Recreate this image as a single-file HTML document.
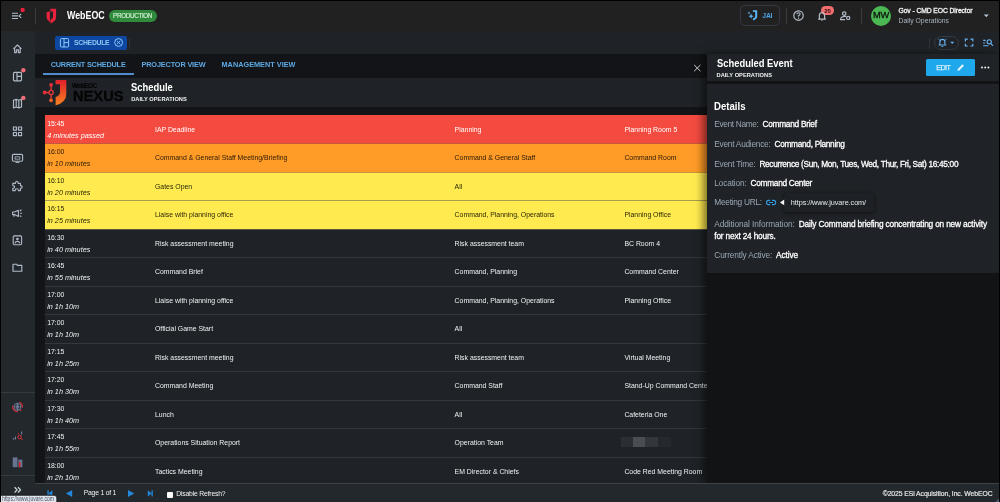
<!DOCTYPE html>
<html lang="en">
<head>
<meta charset="utf-8">
<title>WebEOC - Schedule</title>
<style>
*{box-sizing:border-box;margin:0;padding:0}
html,body{width:1000px;height:502px;overflow:hidden;background:#000;font-family:"Liberation Sans",Arial,sans-serif;color:#fff}
#app{position:absolute;left:0;top:0;width:1000px;height:502px;background:#121417;overflow:hidden;will-change:transform}
#frame{position:absolute;left:0;top:0;width:1000px;height:502px;border:1px solid #000;border-bottom:0;border-right-width:1.2px;pointer-events:none}
.t{position:absolute;white-space:nowrap;line-height:1}
.b{font-weight:bold}
#ico{position:absolute;left:0;top:0;width:1000px;height:502px;overflow:visible}
/* top bar */
#topbar{position:absolute;left:0;top:0;width:1000px;height:31px;background:#212121}
.vdiv{position:absolute;width:1px;background:#3d3d3d}
/* sidebar */
#sidebar{position:absolute;left:0;top:31px;width:35px;height:471px;background:#23282c}
.hdiv{position:absolute;left:1px;width:34px;height:1px;background:#353a3f}
/* tab bar */
#tabbar{position:absolute;left:35px;top:31px;width:965px;height:23px;background:#1f2327}
#navtabs{position:absolute;left:35px;top:54px;width:672px;height:24px;background:#121417}
#bhead{position:absolute;left:35px;top:78px;width:672px;height:29px;background:#1f2327}
/* table */
#tbl{position:absolute;left:44.5px;top:115px;width:662.5px;height:368px;overflow:hidden}
.row{position:absolute;left:0;width:663px;height:29px;background:#1f2226;border-top:1px solid #33383d;font-size:6.9px;color:#eef1f4}
.row span{position:absolute;white-space:nowrap;line-height:1}
.c1{left:2.7px;top:5.4px}
.c1i{left:2.7px;top:16.1px;font-style:italic;font-size:7.25px}
.c2{left:110.5px;top:11.3px}
.c3{left:410.1px;top:11.3px}
.c4{left:579.9px;top:11.3px}
.red{background:#f34b40;color:#fff;border-top-color:#f34b40}
.org{background:#ff9b27;color:#2a1c08;border-top-color:#c5583a}
.yel{background:#ffeb50;color:#2a2608;border-top-color:#a79d4d}
.yel1{border-top-color:#c9973a}
.d1{border-top-color:#5a583c}
.blur{position:absolute;left:576px;top:7.8px;width:50px;height:10px;background:linear-gradient(90deg,#2b2f33 0,#2b2f33 24%,#4a4e52 24%,#4a4e52 48%,#33373b 48%,#33373b 74%,#25292d 74%,#25292d 100%)}
/* bottom bar */
#bbar{position:absolute;left:35px;top:483.3px;width:965px;height:19px;background:#23282c;border-top:1px solid #3d4247}
/* right panel */
#rpanel{position:absolute;left:707px;top:54px;width:293px;height:429px;background:#111315;box-shadow:-4px 0 8px rgba(0,0,0,.5)}
#rhead{position:absolute;left:0;top:0;width:293px;height:26.6px;background:#1f2327}
#rcard{position:absolute;left:0;top:30px;width:293px;height:188.7px;background:#1f2226}
.lbl{color:#9aa7b4;font-size:8.3px}
.val{color:#fff;font-size:8.3px;-webkit-text-stroke:0.28px #fff}
.m{-webkit-text-stroke:0.25px currentColor}
</style>
</head>
<body>
<div id="app">

<!-- TOP BAR -->
<div id="topbar">
 <div class="vdiv" style="left:35px;top:8px;height:16px"></div>
 <div class="t b" style="transform-origin:0 50%;transform:scaleX(0.8517);left:66.8px;top:10.7px;font-size:10.4px;color:#fff">WebEOC</div>
 <div style="position:absolute;left:108.8px;top:10px;width:48px;height:11.8px;border-radius:6px;background:#2f8a3b"></div>
 <div class="t" style="letter-spacing:-0.334px;left:113.1px;top:12.8px;font-size:6.3px;color:#d4f0d6;-webkit-text-stroke:0.15px #d4f0d6">PRODUCTION</div>
 <div style="position:absolute;left:739.8px;top:5.1px;width:40px;height:21px;border:1px solid #333a42;border-radius:4.5px"></div>
 <div class="t b" style="letter-spacing:-0.193px;left:762.3px;top:13.1px;font-size:6.8px;color:#4ea6e6">JAI</div>
 <div class="vdiv" style="left:786px;top:8px;height:16px"></div>
 <div style="position:absolute;left:820.8px;top:6.3px;width:13.6px;height:8.8px;border-radius:4.4px;background:#f26d6d;box-shadow:0 0 0 0.8px #212121"></div>
 <div class="t b" style="letter-spacing:0.056px;left:824.2px;top:8.1px;font-size:6px;color:#2a0d0d">20</div>
 <div class="vdiv" style="left:861px;top:8px;height:16px"></div>
 <div style="position:absolute;left:870.9px;top:5.5px;width:20.2px;height:20.2px;border-radius:50%;background:#4cb853"></div>
 <div class="t" style="letter-spacing:-0.016px;left:872.9px;top:11.2px;font-size:9.3px;color:#0e140f;-webkit-text-stroke:0.3px #0e140f">MW</div>
 <div class="t m" style="letter-spacing:-0.104px;left:898.5px;top:8.2px;font-size:6.8px;color:#f4f4f4;-webkit-text-stroke-width:0.3px">Gov - CMD EOC Director</div>
 <div class="t" style="letter-spacing:0.009px;left:898.5px;top:18.1px;font-size:6.8px;color:#a9b4bf">Daily Operations</div>
</div>

<!-- SIDEBAR -->
<div id="sidebar"></div>
<div class="hdiv" style="top:392px"></div>
<div class="hdiv" style="top:475px"></div>

<!-- TAB BAR -->
<div id="tabbar">
 <div style="position:absolute;left:19.7px;top:4.6px;width:72.5px;height:14.5px;border-radius:2px;background:#0d47a1"></div>
 <div class="t b" style="letter-spacing:-0.274px;left:39.1px;top:8.9px;font-size:6.8px;color:#8fc6f5">SCHEDULE</div>
 <div class="vdiv" style="left:94px;top:6.5px;height:11px;background:#2d3237"></div>
 <div class="vdiv" style="left:894.2px;top:7px;height:11px;background:#2f3439"></div>
 <div style="position:absolute;left:898.8px;top:4.8px;width:25.5px;height:14px;border:1px solid #333a41;border-radius:7px"></div>
</div>
<div id="navtabs">
 <div class="t b" style="letter-spacing:-0.184px;left:15.7px;top:6.8px;font-size:7.3px;color:#5ea9e4">CURRENT SCHEDULE</div>
 <div class="t b" style="letter-spacing:-0.141px;left:106.5px;top:6.8px;font-size:7.3px;color:#5ea9e4">PROJECTOR VIEW</div>
 <div class="t b" style="letter-spacing:0.015px;left:186.5px;top:6.8px;font-size:7.3px;color:#5ea9e4">MANAGEMENT VIEW</div>
 <div style="position:absolute;left:7.7px;top:18.6px;width:91px;height:2px;background:#4f8ecb"></div>
</div>
<div id="bhead">
 <div class="t b" style="letter-spacing:-0.439px;left:37.1px;top:4.9px;font-size:6.4px;color:#050505;-webkit-text-stroke:0.2px #050505">WebEOC</div>
 <div class="t b" style="transform-origin:0 50%;transform:scaleX(0.9456);left:37.6px;top:10.3px;font-size:15.5px;color:#050505;-webkit-text-stroke:0.35px #050505">NEXUS</div>
 <div class="t b" style="transform-origin:0 50%;transform:scaleX(0.9047);left:96.2px;top:4.8px;font-size:10.4px;color:#fff">Schedule</div>
 <div class="t b" style="letter-spacing:0.025px;left:96.2px;top:18.8px;font-size:5.7px;color:#f0f0f0">DAILY OPERATIONS</div>
</div>

<!-- TABLE -->
<div id="tbl">
 <div class="row red" style="top:-0.5px"><span class="c1">15:45</span><span class="c1i">4 minutes passed</span><span class="c2">IAP Deadline</span><span class="c3">Planning</span><span class="c4">Planning Room 5</span></div>
 <div class="row org" style="top:28.0px"><span class="c1">16:00</span><span class="c1i">in 10 minutes</span><span class="c2">Command &amp; General Staff Meeting/Briefing</span><span class="c3">Command &amp; General Staff</span><span class="c4">Command Room</span></div>
 <div class="row yel yel1" style="top:56.5px"><span class="c1">16:10</span><span class="c1i">in 20 minutes</span><span class="c2">Gates Open</span><span class="c3">All</span></div>
 <div class="row yel" style="top:85.0px"><span class="c1">16:15</span><span class="c1i">in 25 minutes</span><span class="c2">Liaise with planning office</span><span class="c3">Command, Planning, Operations</span><span class="c4">Planning Office</span></div>
 <div class="row d1" style="top:113.5px"><span class="c1">16:30</span><span class="c1i">in 40 minutes</span><span class="c2">Risk assessment meeting</span><span class="c3">Risk assessment team</span><span class="c4">BC Room 4</span></div>
 <div class="row " style="top:142.0px"><span class="c1">16:45</span><span class="c1i">in 55 minutes</span><span class="c2">Command Brief</span><span class="c3">Command, Planning</span><span class="c4">Command Center</span></div>
 <div class="row " style="top:170.5px"><span class="c1">17:00</span><span class="c1i">in 1h 10m</span><span class="c2">Liaise with planning office</span><span class="c3">Command, Planning, Operations</span><span class="c4">Planning Office</span></div>
 <div class="row " style="top:199.0px"><span class="c1">17:00</span><span class="c1i">in 1h 10m</span><span class="c2">Official Game Start</span><span class="c3">All</span></div>
 <div class="row " style="top:227.5px"><span class="c1">17:15</span><span class="c1i">in 1h 25m</span><span class="c2">Risk assessment meeting</span><span class="c3">Risk assessment team</span><span class="c4">Virtual Meeting</span></div>
 <div class="row " style="top:256.0px"><span class="c1">17:20</span><span class="c1i">in 1h 30m</span><span class="c2">Command Meeting</span><span class="c3">Command Staff</span><span class="c4">Stand-Up Command Center</span></div>
 <div class="row " style="top:284.5px"><span class="c1">17:30</span><span class="c1i">in 1h 40m</span><span class="c2">Lunch</span><span class="c3">All</span><span class="c4">Cafeteria One</span></div>
 <div class="row " style="top:313.0px"><span class="c1">17:45</span><span class="c1i">in 1h 55m</span><span class="c2">Operations Situation Report</span><span class="c3">Operation Team</span><i class="blur"></i></div>
 <div class="row " style="top:341.5px"><span class="c1">18:00</span><span class="c1i">in 2h 10m</span><span class="c2">Tactics Meeting</span><span class="c3">EM Director &amp; Chiefs</span><span class="c4">Code Red Meeting Room</span></div>
</div>

<!-- RIGHT PANEL -->
<div id="rpanel">
 <div id="rhead">
  <div class="t b" style="transform-origin:0 50%;transform:scaleX(0.9029);left:9.5px;top:4.6px;font-size:10.4px;color:#fff">Scheduled Event</div>
  <div class="t b" style="letter-spacing:0.019px;left:9.5px;top:19px;font-size:5.7px;color:#f0f0f0">DAILY OPERATIONS</div>
  <div style="position:absolute;left:219.2px;top:5px;width:48.6px;height:17px;border-radius:1.5px;background:#1fa8ec"></div>
  <div class="t m" style="letter-spacing:-0.544px;left:229.2px;top:10px;font-size:7.2px;color:#d4eeff">EDIT</div>
 </div>
 <div id="rcard">
  <div class="t b" style="transform-origin:0 50%;transform:scaleX(0.9243);left:7.4px;top:17.7px;font-size:10.4px;color:#fff">Details</div>
  <div class="t lbl" style="letter-spacing:-0.334px;left:7.3px;top:36.4px">Event Name:</div>
  <div class="t val" style="letter-spacing:-0.265px;left:55.5px;top:36.4px">Command Brief</div>
  <div class="t lbl" style="letter-spacing:-0.251px;left:7.3px;top:55.9px">Event Audience:</div>
  <div class="t val" style="letter-spacing:-0.299px;left:67.5px;top:55.9px">Command, Planning</div>
  <div class="t lbl" style="letter-spacing:-0.247px;left:7.3px;top:75.9px">Event Time:</div>
  <div class="t val" style="letter-spacing:-0.326px;left:52.4px;top:75.9px">Recurrence (Sun, Mon, Tues, Wed, Thur, Fri, Sat) 16:45:00</div>
  <div class="t lbl" style="letter-spacing:-0.154px;left:7.3px;top:95.4px">Location:</div>
  <div class="t val" style="letter-spacing:-0.292px;left:43.6px;top:95.4px">Command Center</div>
  <div class="t lbl" style="letter-spacing:-0.270px;left:7.3px;top:113.9px">Meeting URL:</div>
  <div style="position:absolute;left:76.7px;top:109px;width:90px;height:18.5px;border-radius:2px;background:#1d2024;box-shadow:0 1px 4px rgba(0,0,0,.5)"></div>
  <div class="t" style="letter-spacing:-0.077px;left:83.8px;top:114.6px;font-size:7.3px;color:#e6e9ec">https://www.juvare.com/</div>
  <div class="t lbl" style="letter-spacing:-0.090px;left:7.3px;top:136px">Additional Information:</div>
  <div class="t val" style="letter-spacing:-0.179px;left:91.8px;top:136px">Daily Command briefing concentrating on new activity</div>
  <div class="t val" style="letter-spacing:-0.177px;left:7.3px;top:148px">for next 24 hours.</div>
  <div class="t lbl" style="letter-spacing:-0.153px;left:7.3px;top:167.1px">Currently Active:</div>
  <div class="t val" style="letter-spacing:-0.116px;left:69.1px;top:167.1px">Active</div>
 </div>
</div>

<!-- BOTTOM BAR -->
<div id="bbar">
 <div class="t" style="letter-spacing:-0.207px;left:48.7px;top:6.2px;font-size:6.8px;color:#f0f0f0">Page 1 of 1</div>
 <div style="position:absolute;left:132px;top:8px;width:5.6px;height:5.8px;background:#fff;border-radius:1px"></div>
 <div class="t" style="letter-spacing:-0.178px;left:141.2px;top:6.5px;font-size:6.8px;color:#f0f0f0">Disable Refresh?</div>
 <div class="t" style="letter-spacing:-0.070px;left:847.7px;top:6.7px;font-size:6.8px;color:#ececec;-webkit-text-stroke:0.15px #ececec">©2025 ESi Acquisition, Inc. WebEOC</div>
</div>

<!-- status tooltip bottom-left -->

<!-- ICONS (image coordinates) -->
<svg id="ico" viewBox="0 0 1000 502">
 <!-- hamburger / menu-open -->
 <g stroke="#b3bdc8" stroke-width="1.1" fill="none">
  <path d="M11.9 13.2H18M11.9 15.9H18M11.9 18.5H18"/>
  <path d="M21.2 13.9L19 15.9L21.2 17.9"/>
 </g>
 <circle cx="22.6" cy="9.9" r="2.2" fill="#e8213d"/>
 <!-- Juvare shield -->
 <g fill="#e8213d">
  <path d="M50.4 8.8H56.1V17.2Q56.1 21.2 50.4 23.4V19.7Q53 18.7 53 16.4V11.6H50.4Z"/>
  <path d="M46.6 12.3L49.9 11.3V21.9Q46.6 19.9 46.6 16.8Z"/>
 </g>
 <!-- JAI icon -->
 <g fill="#5bb5f5">
  <path d="M752.9 10.3H757.2V16.6Q757.2 19.2 752.9 20.6V18.6Q755.2 17.8 755.2 16.2V12.1H752.9Z"/>
  <path d="M751.1 13.6L751.9 15.4L753.7 16.2L751.9 17L751.1 18.8L750.3 17L748.5 16.2L750.3 15.4Z"/>
  <path d="M749 11.6L749.4 12.6L750.4 13L749.4 13.4L749 14.4L748.6 13.4L747.6 13L748.6 12.6Z"/>
 </g>
 <!-- help -->
 <circle cx="798.5" cy="15.6" r="4.7" fill="none" stroke="#b3bdc8" stroke-width="1.2"/>
 <path d="M796.9 14.3Q796.9 12.7 798.5 12.7Q800.1 12.7 800.1 14.1Q800.1 15 798.5 15.8V16.8" fill="none" stroke="#b3bdc8" stroke-width="1.1"/>
 <circle cx="798.5" cy="18.3" r="0.7" fill="#b3bdc8"/>
 <!-- bell -->
 <path d="M818.1 19.2H825.9M819.4 19.2V15.6Q819.4 12.5 822 12.5Q824.6 12.5 824.6 15.6V19.2" fill="none" stroke="#b3bdc8" stroke-width="1.2"/>
 <path d="M821 20.2H823V20.6Q822 21.4 821 20.6Z" fill="#b3bdc8"/>
 <!-- person + gear -->
 <g fill="none" stroke="#b3bdc8" stroke-width="1.2">
  <circle cx="844.2" cy="13.6" r="1.7"/>
  <path d="M846.2 16.4Q840.6 16 840.6 19.6H845"/>
  <circle cx="848.2" cy="17.9" r="1.6"/>
 </g>
 <!-- user dropdown caret -->
 <path d="M983.8 14.6H988.8L986.3 17.3Z" fill="#b8c6d6"/>

 <!-- SIDEBAR ICONS -->
 <g fill="none" stroke="#b0bbc7" stroke-width="1.15" stroke-linejoin="round">
  <!-- home -->
  <path d="M13.4 48.8L17.4 45L21.4 48.8M14.6 47.8V52.6H16.4V49.8H18.4V52.6H20.2V47.8"/>
  <!-- dashboard -->
  <rect x="13.5" y="72.4" width="8" height="8.4" rx="1"/>
  <path d="M17 72.4V80.8M17 76.4H21.5"/>
  <!-- map -->
  <path d="M13.5 100.3L16.2 99.4L18.8 100.3L21.5 99.4V107L18.8 107.9L16.2 107L13.5 107.9ZM16.2 99.4V107M18.8 100.3V107.9"/>
  <!-- grid/widgets -->
  <rect x="13.4" y="127" width="3.1" height="3.1"/>
  <rect x="18.5" y="127" width="3.1" height="3.1"/>
  <rect x="13.4" y="132.5" width="3.1" height="3.1"/>
  <rect x="18.5" y="132.5" width="3.1" height="3.1"/>
  <!-- monitor -->
  <rect x="12.4" y="154.4" width="10.2" height="6.8" rx="1.2"/>
  <path d="M15.6 162.5H19.4" stroke-width="0.9"/>
  <path d="M15 156.8H19.9V159.2H15Z" stroke-width="0.8"/>
  <!-- puzzle -->
  <path d="M12.8 183.4H15.4Q15.4 181.4 16.8 181.4Q18.2 181.4 18.2 183.4H20.4V185.6Q22.2 185.6 22.2 187Q22.2 188.4 20.4 188.4V190.6H18.4Q18.4 188.8 16.8 188.8Q15.2 188.8 15.2 190.6H12.8V188.4Q14.6 188.4 14.6 187Q14.6 185.6 12.8 185.6Z" stroke-width="1.1"/>
  <!-- megaphone -->
  <path d="M12.6 212H14.6L18.4 210.2V216.4L14.6 214.6H12.6ZM14 214.8V216.8M19.8 211L21.4 209.8M20.2 213.3H22M19.8 215.6L21.4 216.8" stroke-width="1.1"/>
  <!-- badge / contact -->
  <rect x="13.2" y="235.9" width="8.4" height="8.8" rx="1.2" stroke-width="1.1"/>
  <path d="M14.9 235.6V234.9M19.9 235.6V234.9" stroke-width="1.3"/>
  <circle cx="17.4" cy="239" r="1.3" fill="#b3bdc8" stroke="none"/>
  <path d="M15 243.2Q15.6 241.4 17.4 241.4Q19.2 241.4 19.8 243.2" stroke-width="1.2"/>
  <!-- folder -->
  <path d="M13 264.2H16.4L17.4 265.4H21.8V271.2H13Z"/>
  <!-- expand >> -->
  <path d="M14.6 487.3L17.2 489.9L14.6 492.5M18 487.3L20.6 489.9L18 492.5" stroke="#cdd5dd" stroke-width="1.3"/>
 </g>
 <circle cx="23.3" cy="70.3" r="2.2" fill="#f26d78"/>
 <circle cx="23.3" cy="97.9" r="2.2" fill="#f26d78"/>
 <!-- globe (red accents) -->
 <g fill="none" stroke-width="0.9">
  <circle cx="17.5" cy="406.8" r="3.5" stroke="#7583a3"/>
  <path d="M14 406.8H21M17.5 403.3V410.3M17.5 403.3Q15.4 406.8 17.5 410.3M17.5 403.3Q19.6 406.8 17.5 410.3" stroke="#7583a3" stroke-width="0.8"/>
  <path d="M12.9 405.4A4.9 4.9 0 0 0 17.9 411.7" stroke="#e0303a" stroke-width="1.1"/>
  <path d="M19.2 402.2A4.9 4.9 0 0 1 22.3 407.6" stroke="#e0303a" stroke-width="1.1"/>
  <circle cx="20.6" cy="410.4" r="0.8" fill="#e0303a" stroke="none"/>
 </g>
 <!-- chart search -->
 <g fill="none">
  <path d="M13.4 439.4V438M15.4 439.4V436.6M21.6 434.4V431.4" stroke="#7583a3" stroke-width="1.1"/>
  <circle cx="19.6" cy="437" r="1.8" stroke="#e0303a" stroke-width="1"/>
  <path d="M21 438.4L22.5 440" stroke="#e0303a" stroke-width="1"/>
  <circle cx="18.4" cy="433.6" r="0.6" fill="#e0303a"/>
 </g>
 <!-- building -->
 <rect x="12.7" y="457.4" width="4.8" height="9.8" fill="#67748f"/>
 <rect x="18.4" y="459.6" width="4" height="7.6" fill="#67748f"/>
 <rect x="19" y="462" width="1.5" height="5.2" fill="#e8202c"/>

 <!-- SCHEDULE TAB icons -->
 <g fill="none" stroke="#90caf9" stroke-width="1">
  <rect x="60.4" y="38.6" width="8.2" height="8.4" rx="1"/>
  <path d="M64 38.6V47M64 42.6H68.6"/>
  <circle cx="118.6" cy="42.5" r="3.9"/>
  <path d="M116.9 40.8L120.3 44.2M120.3 40.8L116.9 44.2" stroke-width="0.9"/>
 </g>
 <!-- alarm pill -->
 <g fill="none" stroke="#6ab0ea" stroke-width="1.1">
  <path d="M938.6 45H946.2M939.9 45V42.2Q939.9 39.4 942.4 39.4Q944.9 39.4 944.9 42.2V45"/>
  <path d="M941.6 46.5H943.2" stroke-width="1"/>
  <path d="M939.6 40.2L938.4 39.2M945.2 40.2L946.4 39.2" stroke-width="1"/>
 </g>
 <path d="M950.2 41.7H954.2L952.2 44Z" fill="#6ab0ea"/>
 <!-- fullscreen -->
 <path d="M965.4 41.4V39.2H967.8M970.4 39.2H972.8V41.4M972.8 43.8V46H970.4M967.8 46H965.4V43.8" fill="none" stroke="#6ab0ea" stroke-width="1.2"/>
 <!-- list search -->
 <g fill="none" stroke="#6ab0ea" stroke-width="1.1">
  <path d="M983.2 40.4H985.6M983.2 43H985M983.2 45.8H988.4"/>
  <circle cx="989.2" cy="41.8" r="2.1"/>
  <path d="M990.7 43.4L993 45.9"/>
 </g>
 <!-- close X for board -->
 <path d="M694.2 65L700.4 71.2M700.4 65L694.2 71.2" stroke="#ccd1d6" stroke-width="1" fill="none"/>

 <!-- NEXUS logo -->
 <defs>
  <linearGradient id="jg" x1="0" y1="0" x2="0" y2="1"><stop offset="0" stop-color="#e0202c"/><stop offset="1" stop-color="#f5821f"/></linearGradient>
 </defs>
 <path d="M55.6 80H66.3V94Q66.3 102.8 55.6 105.2V96.9Q60 95.8 60 92V84.3H55.6Z" fill="url(#jg)"/>
 <g stroke="#ea3a36" stroke-width="1.3" fill="none">
  <path d="M51.1 86V90.3M51.1 94.7V99.4M45.6 92.5H48.9"/>
  <circle cx="51.1" cy="92.5" r="2.1"/>
 </g>
 <circle cx="51.1" cy="84.8" r="1.9" fill="#e8303a"/>
 <circle cx="44.6" cy="92.5" r="1.9" fill="#e8303a"/>
 <circle cx="51.1" cy="100.3" r="1.9" fill="#f0602a"/>

 <!-- EDIT pencil -->
 <path d="M957.4 70.8L957.8 68.9L962.4 64.3L963.9 65.8L959.3 70.4Z" fill="#e8f6ff"/>
 <!-- more ... -->
 <circle cx="982" cy="67.6" r="1" fill="#f0f0f0"/><circle cx="985.2" cy="67.6" r="1" fill="#f0f0f0"/><circle cx="988.4" cy="67.6" r="1" fill="#f0f0f0"/>
 <!-- link icon -->
 <g fill="none" stroke="#2f9ae0" stroke-width="1.1">
  <path d="M770.2 200.4H768.6Q766.5 200.4 766.5 202.5Q766.5 204.6 768.6 204.6H770.2M772 200.4H773.6Q775.7 200.4 775.7 202.5Q775.7 204.6 773.6 204.6H772M769.2 202.5H773"/>
 </g>
 <!-- tooltip arrow -->
 <path d="M784.2 199.5V205.3L780 202.4Z" fill="#f4f4f4"/>
 <!-- pagination -->
 <g fill="#2488da">
  <path d="M47.4 490.2H48.7V496.6H47.4ZM52.4 490.2V496.6L48.7 493.4Z"/>
  <path d="M72.2 489.9V496.9L66 493.4Z"/>
  <path d="M128 489.9V496.9L134.2 493.4Z"/>
  <path d="M151.5 490.2H152.8V496.6H151.5ZM147.8 490.2V496.6L151.5 493.4Z"/>
 </g>
 <!-- status tooltip bg -->
 <path d="M0 495.3H54Q56.8 495.3 56.8 498V503H0Z" fill="#dfe5ee" stroke="#14161a" stroke-width="0.8"/>
 <path d="M1000 497.5V502H995.5Z" fill="#4a5a70"/>
</svg>

<div class="t" style="transform-origin:0 50%;transform:scaleX(0.8031);left:2px;top:496.2px;font-size:6.3px;color:#4a4f57">https://www.juvare.com</div>
<div id="frame"></div>
</div>
</body>
</html>
